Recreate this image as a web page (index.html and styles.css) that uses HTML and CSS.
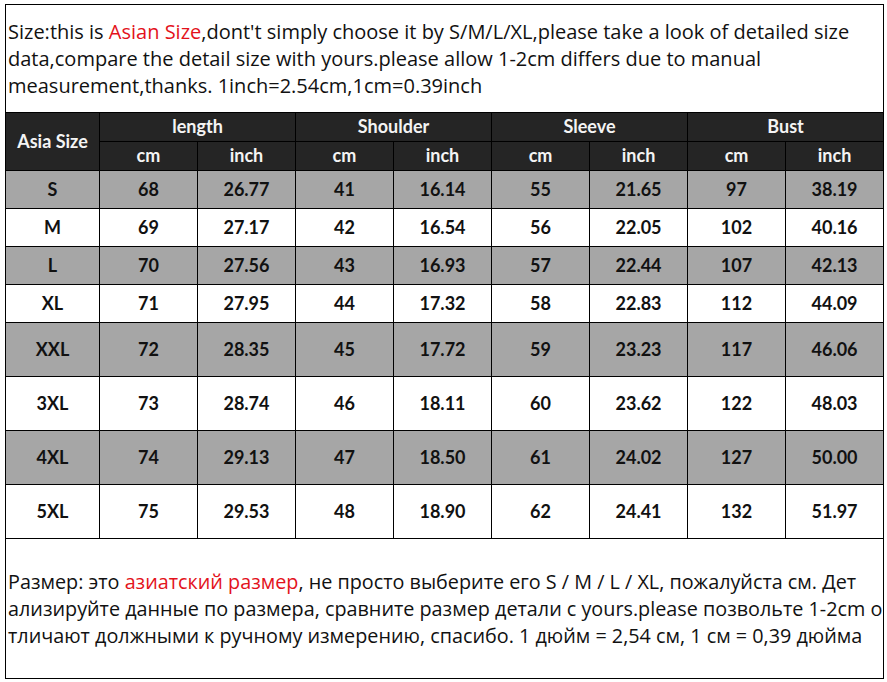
FILE: index.html
```html
<!DOCTYPE html>
<html lang="en">
<head>
<meta charset="utf-8">
<title>Size chart</title>
<link rel="stylesheet" href="styles.css">
</head>
<body>
<div class="frame">
  <div class="note note-top">
    <p>Size:this is <span class="red">Asian Size</span>,dont't simply choose it by S/M/L/XL,please take a look of detailed size<br>data,compare the detail size with yours.please allow 1-2cm differs due to manual<br>measurement,thanks. 1inch=2.54cm,1cm=0.39inch</p>
  </div>
  <table class="chart">
    <colgroup>
      <col class="c-first"><col class="c"><col class="c"><col class="c"><col class="c"><col class="c"><col class="c"><col class="c"><col class="c-last">
    </colgroup>
    <thead>
      <tr class="h1">
        <th rowspan="2">Asia Size</th>
        <th colspan="2">length</th>
        <th colspan="2">Shoulder</th>
        <th colspan="2">Sleeve</th>
        <th colspan="2" class="last">Bust</th>
      </tr>
      <tr class="h2">
        <th>cm</th><th>inch</th><th>cm</th><th>inch</th><th>cm</th><th>inch</th><th>cm</th><th class="last">inch</th>
      </tr>
    </thead>
    <tbody>
      <tr class="gray short"><td>S</td><td>68</td><td>26.77</td><td>41</td><td>16.14</td><td>55</td><td>21.65</td><td>97</td><td class="last">38.19</td></tr>
      <tr class="white short"><td>M</td><td>69</td><td>27.17</td><td>42</td><td>16.54</td><td>56</td><td>22.05</td><td>102</td><td class="last">40.16</td></tr>
      <tr class="gray short"><td>L</td><td>70</td><td>27.56</td><td>43</td><td>16.93</td><td>57</td><td>22.44</td><td>107</td><td class="last">42.13</td></tr>
      <tr class="white short"><td>XL</td><td>71</td><td>27.95</td><td>44</td><td>17.32</td><td>58</td><td>22.83</td><td>112</td><td class="last">44.09</td></tr>
      <tr class="gray tall"><td>XXL</td><td>72</td><td>28.35</td><td>45</td><td>17.72</td><td>59</td><td>23.23</td><td>117</td><td class="last">46.06</td></tr>
      <tr class="white tall"><td>3XL</td><td>73</td><td>28.74</td><td>46</td><td>18.11</td><td>60</td><td>23.62</td><td>122</td><td class="last">48.03</td></tr>
      <tr class="gray tall"><td>4XL</td><td>74</td><td>29.13</td><td>47</td><td>18.50</td><td>61</td><td>24.02</td><td>127</td><td class="last">50.00</td></tr>
      <tr class="white tall"><td>5XL</td><td>75</td><td>29.53</td><td>48</td><td>18.90</td><td>62</td><td>24.41</td><td>132</td><td class="last">51.97</td></tr>
    </tbody>
  </table>
  <div class="note note-bottom">
    <p>Размер: это <span class="red">азиатский размер</span>, не просто выберите его S / M / L / XL, пожалуйста см. Дет<br>ализируйте данные по размера, сравните размер детали с yours.please позвольте 1-2cm о<br>тличают должными к ручному измерению, спасибо. 1 дюйм = 2,54 см, 1 см = 0,39 дюйма</p>
  </div>
</div>
</body>
</html>
```

FILE: styles.css
```css
html, body {
  margin: 0;
  padding: 0;
  background: #ffffff;
}

.frame {
  box-sizing: border-box;
  width: 879px;
  height: 675px;
  margin: 4px 0 0 5px;
  border: 1px solid #000;
  display: flex;
  flex-direction: column;
}

.note {
  display: flex;
  align-items: center;
  padding-left: 2px;
  font-family: "Open Sans", "Noto Sans", sans-serif;
  color: #111;
}

.note p {
  margin: 0;
  white-space: nowrap;
  line-height: 27px;
}

.note-top {
  height: 107px;
  font-size: 20px;
}

.note-bottom {
  flex: 1;
  font-size: 19.8px;
}

.red {
  color: #e3121b;
}

.chart {
  border-collapse: separate;
  border-spacing: 0;
  table-layout: fixed;
  width: 877px;
  font-family: "Lato", "Open Sans", sans-serif;
  font-weight: 700;
  font-size: 18px;
  line-height: 20px;
  text-align: center;
}

.c-first { width: 94px; }
.c { width: 98px; }
.c-last { width: 97px; }

.chart th,
.chart td {
  box-sizing: border-box;
  padding: 0 0 2px;
  border-right: 1px solid #000;
  border-bottom: 1px solid #000;
}

.chart .last {
  border-right: none;
}

.chart thead th {
  background: #252525;
  color: #f4f4f4;
}

.h1 th {
  border-top: 1px solid #000;
  height: 30px;
}

.h2 th {
  height: 29px;
}

.chart td {
  color: #111;
}

.gray td {
  background: #a6a6a6;
}

.white td {
  background: #ffffff;
}

.short td {
  height: 38px;
}

.tall td {
  height: 54px;
}
```
